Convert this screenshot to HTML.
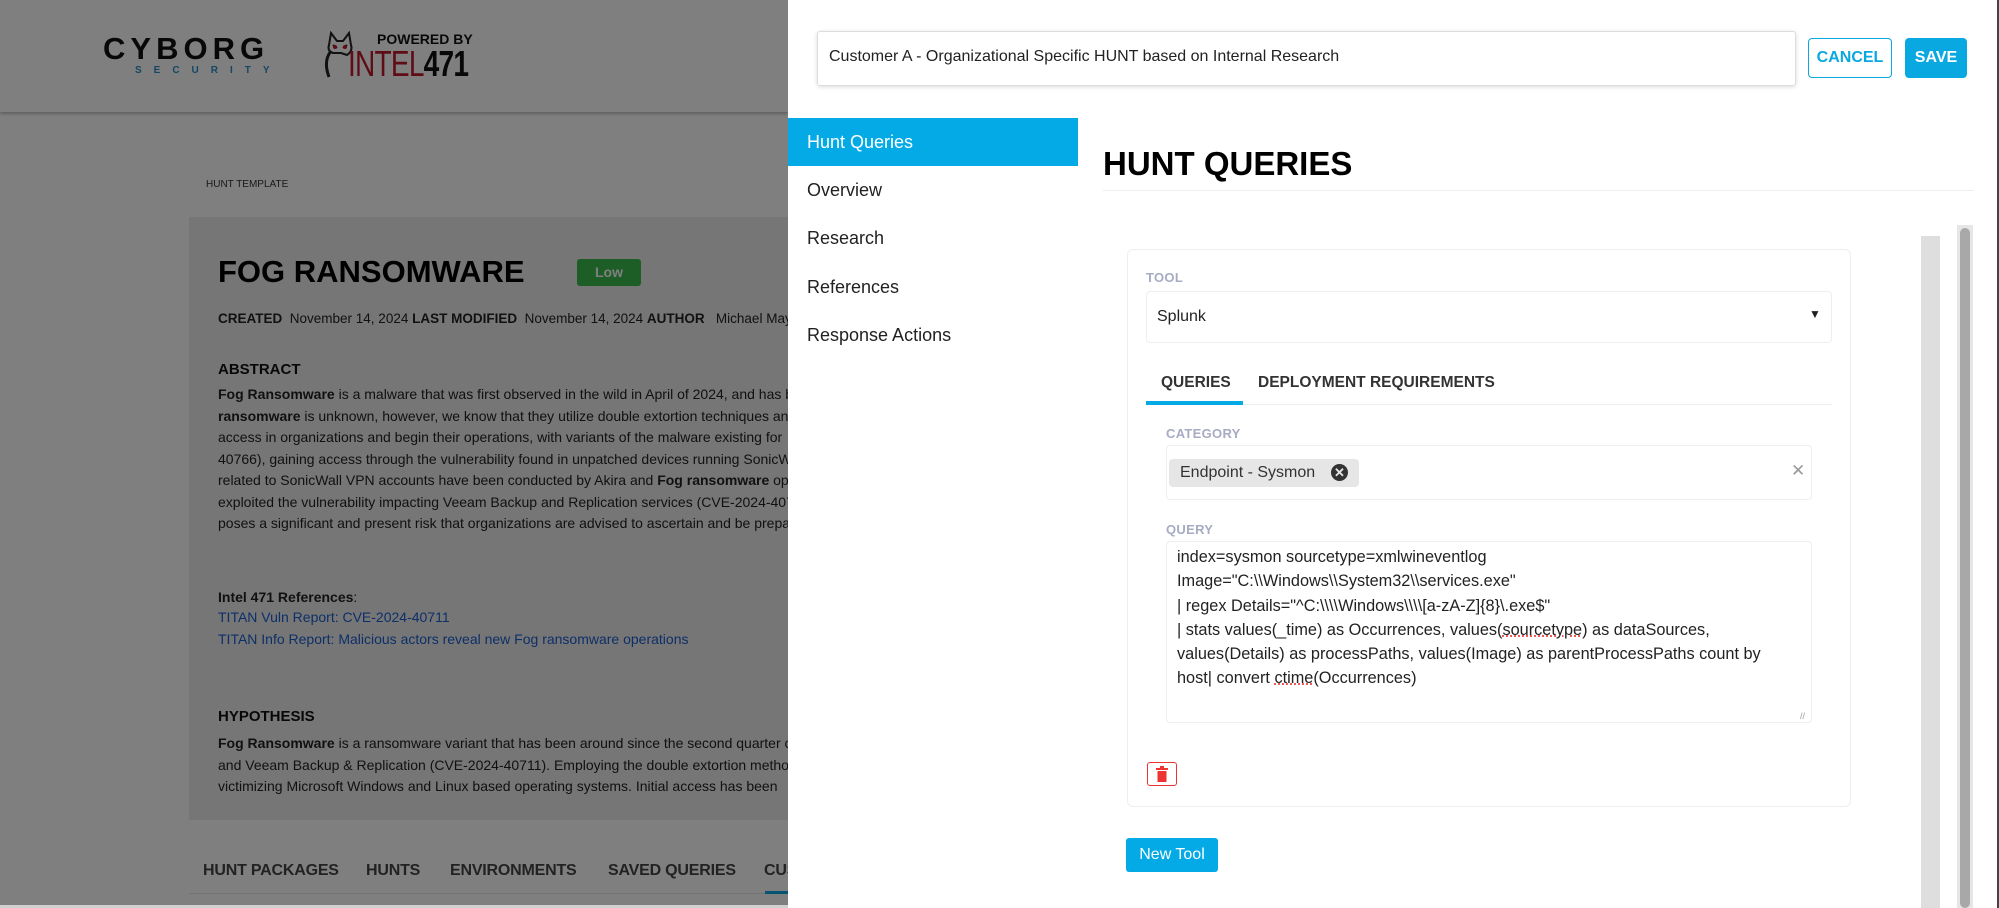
<!DOCTYPE html>
<html><head><meta charset="utf-8"><style>
*{margin:0;padding:0;box-sizing:border-box}
body{width:1999px;height:908px;overflow:hidden;position:relative;font-family:"Liberation Sans",sans-serif;background:#fff;color:#111}
.a{position:absolute;white-space:nowrap}
#bg{position:absolute;left:0;top:0;width:788px;height:908px;background:#fff;overflow:hidden}
#ov{position:absolute;left:0;top:0;width:788px;height:908px;background:rgba(0,0,0,0.5)}
.p{font-size:14px;color:#222;line-height:21.5px}
.h{font-weight:bold;font-size:15px}
.lnk{color:#1a5fd0;font-size:14px}
.tab{font-weight:bold;font-size:16px;color:#444;letter-spacing:-.2px}
.menu{position:absolute;left:807px;font-size:18px;color:#222}
.lbl{position:absolute;font-size:13px;font-weight:bold;color:#a7abc3;letter-spacing:.3px}
.q{position:absolute;left:1177px;font-size:16.3px;color:#222;white-space:nowrap}
</style></head><body>
<div id="bg">
  <div class="a" style="left:0;top:0;width:788px;height:112px;background:#fff;box-shadow:0 2px 3px rgba(0,0,0,.25)"></div>
  <div class="a" style="left:103px;top:31px;font-size:31px;font-weight:bold;letter-spacing:5px;color:#111">CYBORG</div>
  <div class="a" style="left:135px;top:65px;font-size:10px;font-weight:bold;letter-spacing:12px;color:#2a8fc4">SECURITY</div>
  <svg class="a" style="left:323px;top:31px" width="34" height="47" viewBox="0 0 34 47"><path d="M8 2 L14 10 L20 10 L26 2 L28 14 Q30 20 24 24 L18 22 L10 22 Q4 20 6 14Z M10 14 L14 17 M24 14 L20 17" fill="none" stroke="#222" stroke-width="2"/><circle cx="12" cy="16" r="2" fill="#c0192e"/><circle cx="22" cy="16" r="2" fill="#c0192e"/><path d="M8 20 Q0 30 6 46" stroke="#222" stroke-width="3" fill="none"/></svg>
  <div class="a" style="left:377px;top:31px;font-size:14px;font-weight:bold;color:#111">POWERED BY</div>
  <div class="a" style="left:348px;top:46px;font-size:36px;line-height:36px;color:#c0192e;letter-spacing:-1px;transform:scaleX(.78);transform-origin:left">INTEL<b style="color:#111">471</b></div>

  <div class="a" style="left:206px;top:179px;font-size:10px;color:#333">HUNT TEMPLATE</div>
  <div class="a" style="left:189px;top:217px;width:620px;height:603px;background:#ececec"></div>
  <div class="a" style="left:218px;top:254px;font-size:31px;font-weight:bold;color:#000">FOG RANSOMWARE</div>
  <div class="a" style="left:577px;top:259px;width:64px;height:27px;background:#3bbd4f;border-radius:3px;color:#fff;font-size:14px;font-weight:bold;text-align:center;line-height:27px">Low</div>
  <div class="a" style="left:218px;top:311px;font-size:13.5px;color:#222"><b>CREATED</b>&nbsp; November 14, 2024 <b>LAST MODIFIED</b>&nbsp; November 14, 2024 <b>AUTHOR</b>&nbsp;&nbsp; Michael Mayer</div>
  <div class="a h" style="left:218px;top:361px">ABSTRACT</div>
  <div class="a p" style="left:218px;top:384px"><b>Fog Ransomware</b> is a malware that was first observed in the wild in April of 2024, and has been<br><b>ransomware</b> is unknown, however, we know that they utilize double extortion techniques and<br>access in organizations and begin their operations, with variants of the malware existing for<br>40766), gaining access through the vulnerability found in unpatched devices running SonicWall<br>related to SonicWall VPN accounts have been conducted by Akira and <b>Fog ransomware</b> operators<br>exploited the vulnerability impacting Veeam Backup and Replication services (CVE-2024-40711)<br>poses a significant and present risk that organizations are advised to ascertain and be prepared</div>
  <div class="a p" style="left:218px;top:587px"><b>Intel 471 References</b>:</div>
  <div class="a lnk" style="left:218px;top:609px">TITAN Vuln Report: CVE-2024-40711</div>
  <div class="a lnk" style="left:218px;top:631px">TITAN Info Report: Malicious actors reveal new Fog ransomware operations</div>
  <div class="a h" style="left:218px;top:708px">HYPOTHESIS</div>
  <div class="a p" style="left:218px;top:733px"><b>Fog Ransomware</b> is a ransomware variant that has been around since the second quarter of<br>and Veeam Backup &amp; Replication (CVE-2024-40711). Employing the double extortion method<br>victimizing Microsoft Windows and Linux based operating systems. Initial access has been</div>
  <div class="a" style="left:189px;top:806px;width:620px;height:14px;background:#ececec"></div>
  <div class="a tab" style="left:203px;top:862px">HUNT PACKAGES</div>
  <div class="a tab" style="left:366px;top:862px">HUNTS</div>
  <div class="a tab" style="left:450px;top:862px">ENVIRONMENTS</div>
  <div class="a tab" style="left:608px;top:862px">SAVED QUERIES</div>
  <div class="a tab" style="left:764px;top:862px">CUSTOM</div>
  <div class="a" style="left:189px;top:893px;width:600px;height:1px;background:#e6e6e6"></div>
  <div class="a" style="left:765px;top:891px;width:30px;height:3px;background:#0aa8e0"></div>
</div>
<div id="ov"></div>
<div class="a" style="left:0;top:905px;width:788px;height:3px;background:#d0d0d0"></div>

<div class="a" style="left:817px;top:31px;width:979px;height:55px;border:1px solid #ddd;border-radius:3px;box-shadow:0 1px 4px rgba(0,0,0,.15)"></div>
<div class="a" style="left:829px;top:48px;font-size:16px;color:#222">Customer A - Organizational Specific HUNT based on Internal Research</div>
<div class="a" style="left:1808px;top:38px;width:84px;height:40px;border:1px solid #0aa8e0;border-radius:4px;color:#0aa8e0;font-weight:bold;font-size:16px;text-align:center;line-height:38px">CANCEL</div>
<div class="a" style="left:1905px;top:38px;width:62px;height:40px;background:#0aa8e0;border-radius:4px;color:#fff;font-weight:bold;font-size:16px;text-align:center;line-height:40px">SAVE</div>

<div class="a" style="left:788px;top:118px;width:290px;height:48px;background:#03aae6"></div>
<div class="menu" style="top:132px;color:#fff">Hunt Queries</div>
<div class="menu" style="top:180px">Overview</div>
<div class="menu" style="top:228px">Research</div>
<div class="menu" style="top:277px">References</div>
<div class="menu" style="top:325px">Response Actions</div>

<div class="a" style="left:1103px;top:145px;font-size:33px;font-weight:bold;color:#000">HUNT QUERIES</div>
<div class="a" style="left:1103px;top:190px;width:871px;height:1px;background:#eceef2"></div>

<div class="a" style="left:1921px;top:236px;width:19px;height:672px;background:#dedede"></div>
<div class="a" style="left:1957px;top:225px;width:16px;height:683px;background:#e6e6e6"></div>
<div class="a" style="left:1960px;top:228px;width:10px;height:680px;background:#a8a8a8;border-radius:5px"></div>
<div class="a" style="left:1997px;top:0;width:2px;height:908px;background:#444"></div>

<div class="a" style="left:1127px;top:249px;width:724px;height:558px;border:1px solid #eceef2;border-radius:6px"></div>
<div class="lbl" style="left:1146px;top:270px">TOOL</div>
<div class="a" style="left:1146px;top:291px;width:686px;height:52px;border:1px solid #eceef2;border-radius:4px"></div>
<div class="a" style="left:1157px;top:308px;font-size:16px;color:#222">Splunk</div>
<div class="a" style="left:1809px;top:307px;font-size:12px;color:#222">▼</div>
<div class="a" style="left:1161px;top:374px;font-size:15.5px;font-weight:bold;color:#333">QUERIES</div>
<div class="a" style="left:1258px;top:374px;font-size:15.5px;font-weight:bold;color:#333">DEPLOYMENT REQUIREMENTS</div>
<div class="a" style="left:1146px;top:404px;width:686px;height:1px;background:#eceef2"></div>
<div class="a" style="left:1146px;top:401px;width:97px;height:4px;background:#03aae6"></div>

<div class="lbl" style="left:1166px;top:426px">CATEGORY</div>
<div class="a" style="left:1166px;top:445px;width:646px;height:55px;border:1px solid #eceef2;border-radius:4px"></div>
<div class="a" style="left:1169px;top:459px;width:190px;height:28px;background:#e6e6e6;border-radius:4px"></div>
<div class="a" style="left:1180px;top:464px;font-size:16px;color:#333">Endpoint - Sysmon</div>
<div class="a" style="left:1331px;top:464px;width:17px;height:17px;border-radius:50%;background:#333;color:#e6e6e6;font-size:13px;font-weight:bold;text-align:center;line-height:17px">✕</div>
<div class="a" style="left:1791px;top:461px;font-size:17px;color:#999">✕</div>

<div class="lbl" style="left:1166px;top:522px">QUERY</div>
<div class="a" style="left:1166px;top:541px;width:646px;height:182px;border:1px solid #eceef2;border-radius:4px"></div>
<div class="q" style="top:548px">index=sysmon sourcetype=xmlwineventlog</div>
<div class="q" style="top:572px">Image="C:\\Windows\\System32\\services.exe"</div>
<div class="q" style="top:597px">| regex Details="^C:\\\\Windows\\\\[a-zA-Z]{8}\.exe$"</div>
<div class="q" style="top:621px">| stats values(_time) as Occurrences, values(<span style="text-decoration:underline dotted #e33">sourcetype</span>) as dataSources,</div>
<div class="q" style="top:645px">values(Details) as processPaths, values(Image) as parentProcessPaths count by</div>
<div class="q" style="top:669px">host| convert <span style="text-decoration:underline dotted #e33">ctime</span>(Occurrences)</div>
<div class="a" style="left:1800px;top:711px;font-size:9px;color:#999">//</div>

<div class="a" style="left:1147px;top:762px;width:30px;height:24px;border:1px solid #e33;border-radius:3px"></div>
<svg class="a" style="left:1155px;top:766px" width="14" height="16" viewBox="0 0 14 16"><rect x="1" y="2" width="12" height="2" fill="#e33"/><rect x="5" y="0" width="4" height="2" fill="#e33"/><rect x="2.5" y="5" width="9" height="11" fill="#e33"/></svg>

<div class="a" style="left:1126px;top:838px;width:92px;height:34px;background:#03aae6;border-radius:3px;color:#fff;font-size:16px;text-align:center;line-height:34px">New Tool</div>
</body></html>
